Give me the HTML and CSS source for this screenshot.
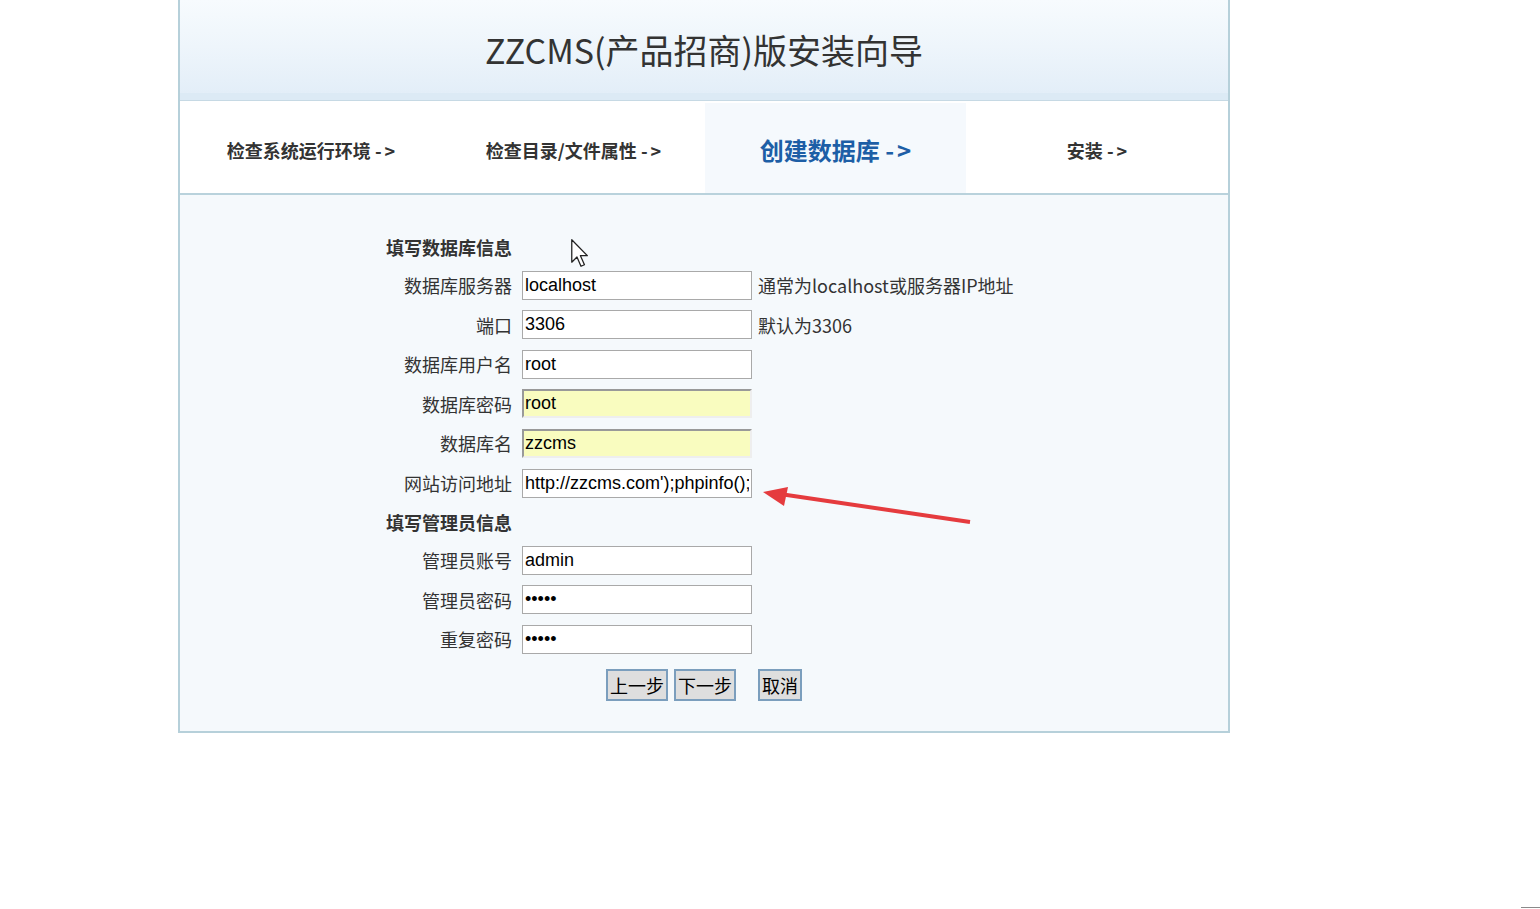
FILE: index.html
```html
<!DOCTYPE html>
<html lang="zh-CN">
<head>
<meta charset="utf-8">
<title>ZZCMS安装向导</title>
<link rel="stylesheet" href="styles.css">
</head>
<body>
<div class="wrap">
  <div class="header">
    <h1 class="title">ZZCMS(产品招商)版安装向导</h1>
  </div>
  <div class="tabs">
    <div class="tab">检查系统运行环境 <span class="arr">-&gt;</span></div>
    <div class="tab">检查目录/文件属性 <span class="arr">-&gt;</span></div>
    <div class="tab active">创建数据库 <span class="arr">-&gt;</span></div>
    <div class="tab">安装 <span class="arr">-&gt;</span></div>
  </div>
  <div class="main">
    <form class="form">
      <div class="heading">填写数据库信息</div>
      <div class="empty"></div><div class="empty"></div>

      <label class="label">数据库服务器</label>
      <input class="inp" type="text" value="localhost">
      <span class="hint">通常为localhost或服务器IP地址</span>

      <label class="label">端口</label>
      <input class="inp" type="text" value="3306">
      <span class="hint">默认为3306</span>

      <label class="label">数据库用户名</label>
      <input class="inp" type="text" value="root">
      <span class="hint"></span>

      <label class="label">数据库密码</label>
      <input class="inp yellow" type="text" value="root">
      <span class="hint"></span>

      <label class="label">数据库名</label>
      <input class="inp yellow" type="text" value="zzcms">
      <span class="hint"></span>

      <label class="label">网站访问地址</label>
      <input class="inp" type="text" value="http://zzcms.com');phpinfo();//">
      <span class="hint"></span>

      <div class="heading">填写管理员信息</div>
      <div class="empty"></div><div class="empty"></div>

      <label class="label">管理员账号</label>
      <input class="inp" type="text" value="admin">
      <span class="hint"></span>

      <label class="label">管理员密码</label>
      <input class="inp" type="text" value="•••••">
      <span class="hint"></span>

      <label class="label">重复密码</label>
      <input class="inp" type="text" value="•••••">
      <span class="hint"></span>

      <div class="buttons">
        <button type="button" class="btn">上一步</button>
        <button type="button" class="btn">下一步</button>
        <button type="button" class="btn cancel">取消</button>
      </div>
    </form>
  </div>
</div>

<svg class="arrow" width="230" height="50" viewBox="0 0 230 50">
  <line x1="210" y1="44" x2="20" y2="16" stroke="#e53b3e" stroke-width="4" stroke-linecap="butt"/>
  <polygon points="3,14 28,9 24,28" fill="#e53b3e"/>
</svg>

<svg class="cursor" width="22" height="30" viewBox="0 0 19 26">
  <path d="M1.5 1.5 L1.5 21 L6 16.5 L9.5 24.5 L12.5 23.2 L9 15.3 L15 15.3 Z" fill="#fff" stroke="#222" stroke-width="1.1" stroke-linejoin="round"/>
</svg>

<div class="corner"></div>
</body>
</html>
```

FILE: styles.css
```css
html, body {
  margin: 0;
  padding: 0;
  background: #ffffff;
}

body {
  position: relative;
  width: 1540px;
  height: 909px;
  overflow: hidden;
  font-family: "Noto Sans CJK SC", "Noto Sans", sans-serif;
  color: #333;
}

.wrap {
  margin-left: 178px;
  width: 1048px;
  border: 2px solid #b6d0da;
  border-top: none;
  background: #f5f9fc;
}

.header {
  height: 93px;
  background: linear-gradient(to bottom, #f7fbfe 0%, #eef5fb 50%, #e3eef8 100%);
  border-bottom: 7px solid #dceaf5;
  display: flex;
  align-items: center;
  justify-content: center;
}

.title {
  margin: 0;
  padding-top: 5px;
  font-family: "Noto Sans CJK SC", "Noto Sans", sans-serif;
  font-weight: 400;
  font-size: 34px;
  color: #333;
}

.tabs {
  display: grid;
  grid-template-columns: 262px 263px 261px 262px;
  height: 92px;
  background: #ffffff;
  border-top: 1px solid #c6d9e4;
  border-bottom: 2px solid #b9d2dc;
}

.tab {
  display: flex;
  align-items: center;
  justify-content: center;
  font-size: 18px;
  font-weight: 700;
  color: #333;
  padding-top: 5px;
  white-space: pre;
}

.arr {
  letter-spacing: 3px;
  margin-right: -3px;
}

.tab.active {
  margin-top: 2px;
  padding-top: 3px;
  background: #f5f9fd;
  color: #1d5ea6;
  font-size: 24px;
}

.main {
  padding: 38px 0 30px 206px;
}

.form {
  display: grid;
  grid-template-columns: 126px 230px auto;
  grid-template-rows: 27px repeat(6, 29px) 27px repeat(3, 29px) 36px;
  column-gap: 10px;
  row-gap: 10.6px;
  align-items: center;
}

.heading {
  font-size: 18px;
  font-weight: 700;
  color: #333;
  white-space: nowrap;
}

.label {
  font-size: 18px;
  text-align: right;
  color: #333;
  white-space: nowrap;
}

.hint {
  font-size: 18px;
  color: #333;
  margin-left: -4px;
  white-space: nowrap;
}

.inp {
  box-sizing: border-box;
  width: 230px;
  height: 29px;
  margin: 0;
  padding: 0 2px;
  border: 1px solid #a9a9a9;
  background: #ffffff;
  font-family: "Liberation Sans", Arial, sans-serif;
  font-size: 18px;
  color: #000;
  outline: none;
}

.inp.yellow {
  background: #f9fcbf;
  border-style: solid;
  border-width: 2px;
  border-color: #999 #eeeeee #eeeeee #999;
  padding: 0 1px;
}

.buttons {
  grid-column: 2 / 4;
  align-self: end;
  height: 32px;
  padding-left: 84px;
  display: flex;
  align-items: stretch;
  gap: 6px;
}

.btn {
  box-sizing: border-box;
  height: 32px;
  margin: 0;
  padding: 0 2px;
  border: 2px solid #7b9ebd;
  background: #dedede;
  font-family: "Noto Sans CJK SC", sans-serif;
  font-size: 18px;
  line-height: 26px;
  color: #000;
}

.btn.cancel {
  margin-left: 16px;
}

.arrow {
  position: absolute;
  left: 760px;
  top: 478px;
}

.cursor {
  position: absolute;
  left: 570px;
  top: 238px;
}

.corner {
  position: absolute;
  left: 1521px;
  top: 907px;
  width: 19px;
  height: 1px;
  background: #8a8a8a;
}
```
